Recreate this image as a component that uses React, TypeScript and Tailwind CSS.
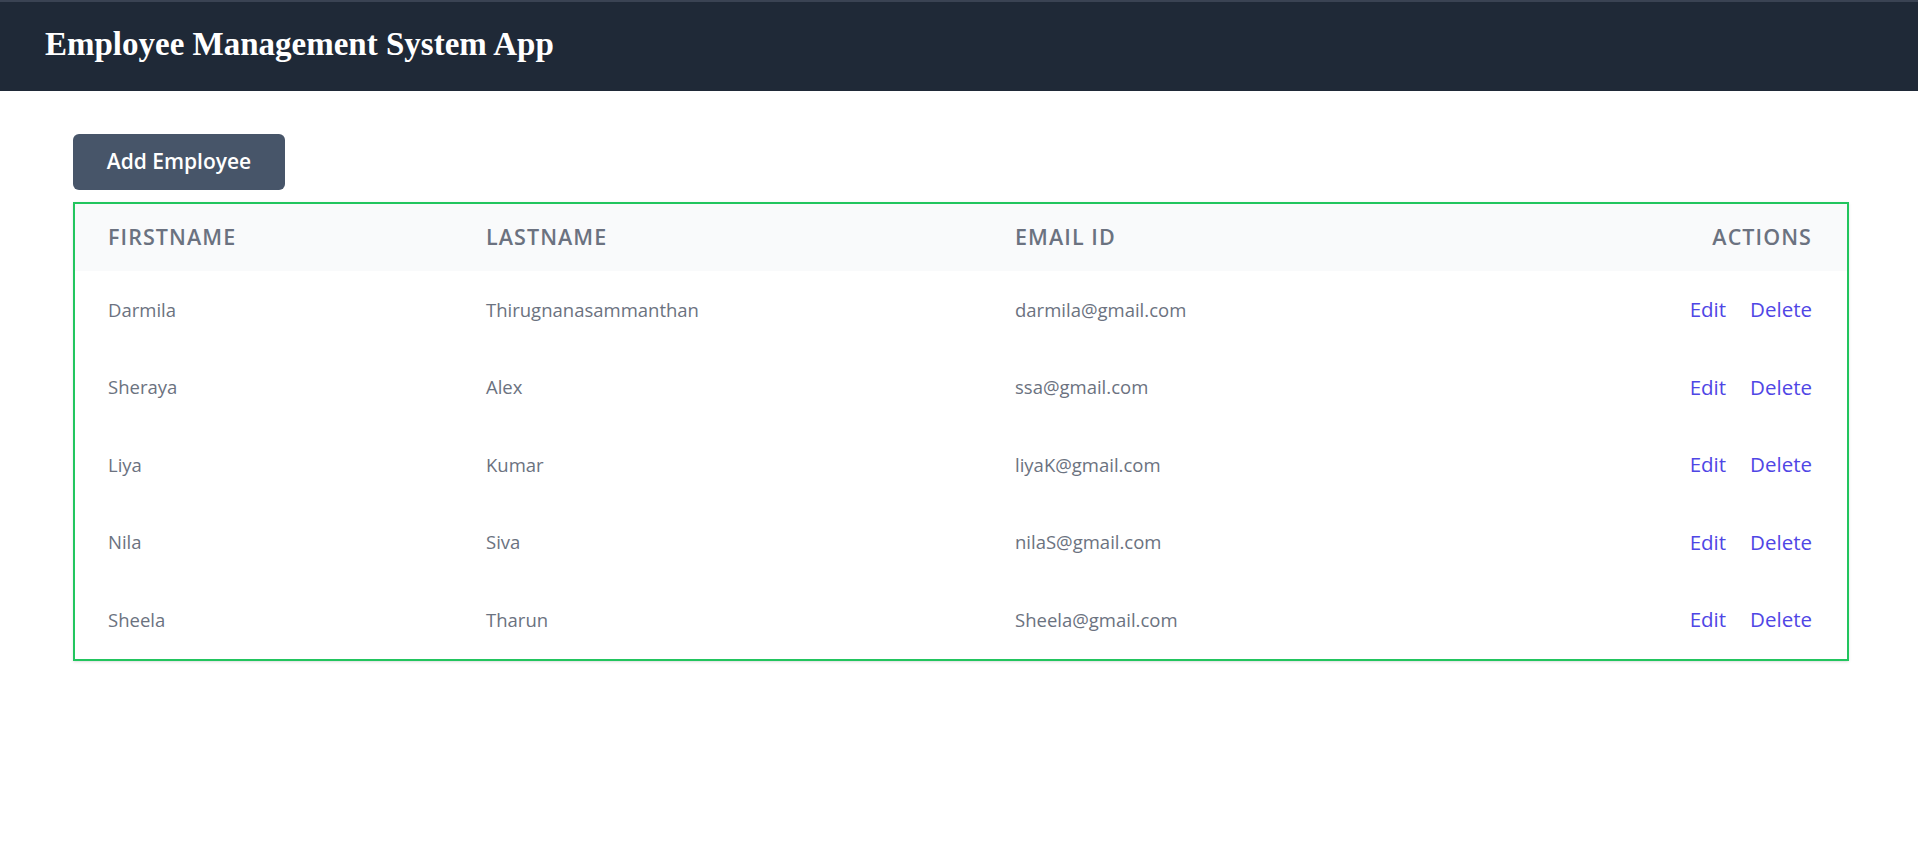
const EMPLOYEES = [
  { firstName: "Darmila", lastName: "Thirugnanasammanthan", email: "darmila@gmail.com" },
  { firstName: "Sheraya", lastName: "Alex", email: "ssa@gmail.com" },
  { firstName: "Liya", lastName: "Kumar", email: "liyaK@gmail.com" },
  { firstName: "Nila", lastName: "Siva", email: "nilaS@gmail.com" },
  { firstName: "Sheela", lastName: "Tharun", email: "Sheela@gmail.com" },
];

export default function App() {
  return (
    <div className="min-h-screen bg-white font-['Open_Sans',sans-serif]">
      {/* Navbar */}
      <nav className="h-[91px] border-t-2 border-[#3a4353] bg-[#1f2937] flex items-center px-[45px]">
        <h1 className="-mt-[3px] font-['Liberation_Serif',serif] text-[33px] font-bold text-white">
          Employee Management System App
        </h1>
      </nav>

      <div className="pl-[73px] pr-[69px] pt-[43px]">
        <button className="h-[56px] w-[212px] rounded-md bg-[#475569] text-[21px] font-semibold text-white">
          Add Employee
        </button>

        <div className="mt-[12px] border-2 border-[#22c55e] shadow-sm">
          <table className="w-full table-fixed">
            <thead className="bg-[#f9fafb]">
              <tr className="h-[67px] text-left text-[21.5px] font-semibold uppercase tracking-wider text-[#6b7280]">
                <th className="w-[378px] pl-[33px] font-semibold">Firstname</th>
                <th className="w-[529px] pl-[33px] font-semibold">Lastname</th>
                <th className="pl-[33px] font-semibold">Email Id</th>
                <th className="w-[300px] pr-[35px] text-right font-semibold">Actions</th>
              </tr>
            </thead>
            <tbody>
              {EMPLOYEES.map((emp) => (
                <tr key={emp.email} className="h-[77.5px] text-[18.5px] text-[#6b7280]">
                  <td className="pl-[33px]">{emp.firstName}</td>
                  <td className="pl-[33px]">{emp.lastName}</td>
                  <td className="pl-[33px]">{emp.email}</td>
                  <td className="pr-[35px] text-right text-[20.5px] text-[#4f46e5]">
                    <a className="mr-[24px] cursor-pointer">Edit</a>
                    <a className="cursor-pointer">Delete</a>
                  </td>
                </tr>
              ))}
            </tbody>
          </table>
        </div>
      </div>
    </div>
  );
}
